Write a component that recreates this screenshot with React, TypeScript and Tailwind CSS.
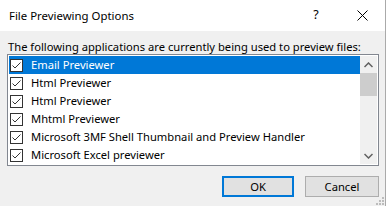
import React from "react";

const items = [
  "Email Previewer",
  "Html Previewer",
  "Html Previewer",
  "Mhtml Previewer",
  "Microsoft 3MF Shell Thumbnail and Preview Handler",
  "Microsoft Excel previewer",
];

function Check() {
  return (
    <div className="w-[13px] h-[13px] border border-[#333333] bg-white flex items-center justify-center shrink-0">
      <svg width="11" height="11" viewBox="0 0 11 11">
        <polyline points="1.5,5.5 4,8 9.5,2.5" fill="none" stroke="#333333" strokeWidth="1" />
      </svg>
    </div>
  );
}

export default function App() {
  return (
    <div
      className="w-[386px] h-[206px] flex flex-col border-r border-[#aaaaaa] text-[11.2px] text-black overflow-hidden"
      style={{ fontFamily: '"Segoe UI", "Noto Sans", "Liberation Sans", sans-serif' }}
    >
      <div className="h-[31px] bg-white flex items-center shrink-0">
        <span className="pl-[9px] flex-1 leading-[16px] text-[11.4px]">File Previewing Options</span>
        <span className="w-[46px] text-center text-[12.5px]">?</span>
        <span className="w-[46px] flex justify-center">
          <svg width="11" height="11" viewBox="0 0 11 11">
            <path d="M0.5 0.5 L10.5 10.5 M10.5 0.5 L0.5 10.5" stroke="#000" strokeWidth="1" />
          </svg>
        </span>
      </div>
      <div className="flex-1 bg-[#f0f0f0] pl-[7px] pr-[6px] pt-[8px] relative">
        <div className="leading-[15px] h-[15px] whitespace-nowrap pl-[1px]">
          The following applications are currently being used to preview files:
        </div>
        <div className="h-[112px] border border-[#828790] bg-white p-[1px] flex">
          <div className="flex-1 flex flex-col">
            {items.map((t, i) => (
              <div
                key={i}
                className={
                  "h-[18px] flex items-center pl-[1px] gap-[8px] whitespace-nowrap " +
                  (i === 0 ? "bg-[#0078d7] text-white" : "")
                }
              >
                <Check />
                <span className="leading-[16px]">{t}</span>
              </div>
            ))}
          </div>
          <div className="w-[17px] bg-[#f0f0f0] flex flex-col items-center">
            <div className="h-[17px] w-full flex items-center justify-center">
              <svg width="9" height="6" viewBox="0 0 9 6">
                <polyline points="0.5,5 4.5,1 8.5,5" fill="none" stroke="#606060" strokeWidth="1.5" />
              </svg>
            </div>
            <div className="w-full h-[23px] bg-[#cdcdcd]" />
            <div className="flex-1" />
            <div className="h-[17px] w-full flex items-center justify-center">
              <svg width="9" height="6" viewBox="0 0 9 6">
                <polyline points="0.5,1 4.5,5 8.5,1" fill="none" stroke="#606060" strokeWidth="1.5" />
              </svg>
            </div>
          </div>
        </div>
        <div className="flex justify-end gap-[11px] mt-[10px]">
          <button className="w-[72px] h-[21px] bg-[#e1e1e1] border-2 border-[#0078d7] flex items-center justify-center leading-[15px]">
            OK
          </button>
          <button className="w-[74px] h-[21px] bg-[#e1e1e1] border border-[#adadad] flex items-center justify-center leading-[15px]">
            Cancel
          </button>
        </div>
        <svg className="absolute right-0 bottom-0" width="11" height="11" viewBox="0 0 11 11">
          {[
            [8, 2], [8, 5], [5, 5], [8, 8], [5, 8], [2, 8],
          ].map(([x, y], i) => (
            <rect key={i} x={x} y={y} width="2" height="2" fill="#bcbcbc" />
          ))}
        </svg>
      </div>
    </div>
  );
}
